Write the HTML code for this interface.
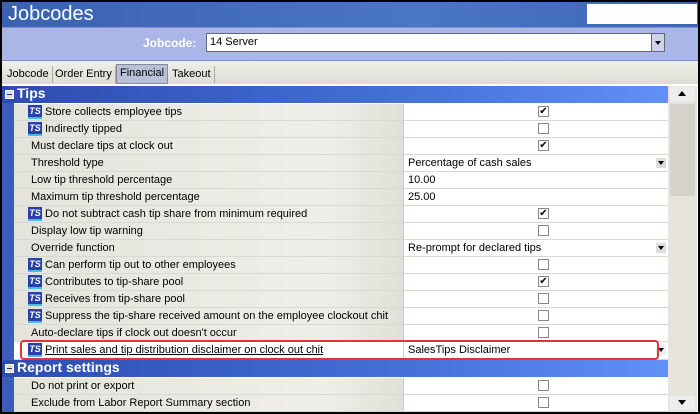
<!DOCTYPE html>
<html><head><style>
*{margin:0;padding:0;box-sizing:border-box}
body{width:700px;height:414px;background:#000;font-family:"Liberation Sans",sans-serif;font-size:11px;color:#000;position:relative;overflow:hidden}
.a{position:absolute}
#title{left:2px;top:2px;width:696px;height:25px;background:linear-gradient(90deg,#3a62b0,#4a76c6 60%,#3d66b8)}
#title span{position:absolute;left:6px;top:1px;color:#fff;font-size:20px}
#wbox{left:587px;top:4px;width:110px;height:20px;background:#fff}
#jrow{left:2px;top:27px;width:696px;height:33px;background:#aab6e6;border-top:1px solid #8090c8}
#tabs{left:2px;top:60px;width:696px;height:24px;background:linear-gradient(#f0efe8,#dddcd4);border-top:1px solid #8090c8}
.tab{position:absolute;top:5px;height:17px;padding:2px 3px 0;border-right:1px solid #aaa;font-size:11px}
#grid{left:2px;top:84px;width:696px;height:328px;background:#fff}
.strip{left:2px;top:86px;width:12px;height:326px;background:#3c5cb8}
.hdr{position:absolute;left:2px;width:666px;height:17px;background:linear-gradient(90deg,#2d4cb0,#4470d8 60%,#6090f8);color:#fff;font-weight:bold;font-size:14px}
.hdr b{position:absolute;left:15px;top:-1px}
.minus{position:absolute;left:3px;top:4px;width:9px;height:9px;background:#dde;border:1px solid #fff}
.minus:after{content:"";position:absolute;left:1px;top:3px;width:5px;height:1px;background:#335}
.row{position:absolute;left:14px;width:654px;height:17px;border-bottom:1px solid #d8d8d4}
.lab{position:absolute;left:0;top:0;width:390px;height:16px;background:linear-gradient(90deg,#e4e3dc,#efeee8 80%,#e0dfd8);padding:2px 0 0 17px;white-space:nowrap;border-right:1px solid #ccc}
.lab.ts{padding-left:31px}
.ic{position:absolute;left:14px;top:1px;width:14px;height:14px;background:#2840a8;color:#fff;font-size:9px;font-weight:bold;line-height:12px;text-align:center;border-bottom:2px solid #40c0e0}
.val{position:absolute;left:390px;top:0;width:264px;height:16px;background:#fff;padding:2px 0 0 4px}
.cb{position:absolute;left:134px;top:2px;width:11px;height:11px;border:1px solid #888;background:#fff;font-size:10px;line-height:9px;text-align:center}
.dd{position:absolute;right:2px;top:3px;width:10px;height:10px;background:#ddd}
.dd:after{content:"";position:absolute;left:2px;top:3px;border-left:3px solid transparent;border-right:3px solid transparent;border-top:4px solid #000}
#sb{left:668px;top:86px;width:29px;height:326px;background:#e6e4dc}
#thumb{left:670px;top:104px;width:25px;height:92px;background:#d4d2ca}
</style></head><body>
<div class="a" id="title"><span>Jobcodes</span></div>
<div class="a" id="wbox"></div>
<div class="a" id="jrow">
 <span class="a" style="left:141px;top:8px;color:#fff;font-weight:bold;font-size:12px">Jobcode:</span>
 <div class="a" style="left:204px;top:5px;width:446px;height:19px;background:#fff;border:1px solid #666;padding:2px 3px">14 Server</div>
 <div class="a" style="left:649px;top:5px;width:14px;height:19px;background:#cdd3ee;border:1px solid #666"><div class="dd" style="right:1px;top:4px;background:none"></div></div>
</div>
<div class="a" id="tabs">
 <div class="tab" style="left:2px">Jobcode</div>
 <div class="tab" style="left:50px">Order Entry</div>
 <div class="tab" style="left:114px;background:#b8c0d8;border:1px solid #889;top:3px;height:20px">Financial</div>
 <div class="tab" style="left:167px">Takeout</div>
</div>
<div class="a" id="grid"></div>
<div class="a strip"></div>
<div class="a" id="sb"></div>
<div class="a" id="thumb"></div>
<div class="a" style="left:670px;top:87px;width:25px;height:14px;background:#eee"><div class="a" style="left:8px;top:4px;border-left:4px solid transparent;border-right:4px solid transparent;border-bottom:5px solid #000"></div></div>
<div class="a" style="left:670px;top:396px;width:25px;height:14px;background:#eee"><div class="a" style="left:8px;top:4px;border-left:4px solid transparent;border-right:4px solid transparent;border-top:5px solid #000"></div></div>

<div class="hdr" style="top:86px"><div class="minus"></div><b>Tips</b></div>

<div class="row" style="top:104px"><div class="lab ts"><i class="ic">TS</i>Store collects employee tips</div><div class="val"><div class="cb">✔</div></div></div>
<div class="row" style="top:121px"><div class="lab ts"><i class="ic">TS</i>Indirectly tipped</div><div class="val"><div class="cb"></div></div></div>
<div class="row" style="top:138px"><div class="lab">Must declare tips at clock out</div><div class="val"><div class="cb">✔</div></div></div>
<div class="row" style="top:155px"><div class="lab">Threshold type</div><div class="val">Percentage of cash sales<div class="dd"></div></div></div>
<div class="row" style="top:172px"><div class="lab">Low tip threshold percentage</div><div class="val">10.00</div></div>
<div class="row" style="top:189px"><div class="lab">Maximum tip threshold percentage</div><div class="val">25.00</div></div>
<div class="row" style="top:206px"><div class="lab ts"><i class="ic">TS</i>Do not subtract cash tip share from minimum required</div><div class="val"><div class="cb">✔</div></div></div>
<div class="row" style="top:223px"><div class="lab">Display low tip warning</div><div class="val"><div class="cb"></div></div></div>
<div class="row" style="top:240px"><div class="lab">Override function</div><div class="val">Re-prompt for declared tips<div class="dd"></div></div></div>
<div class="row" style="top:257px"><div class="lab ts"><i class="ic">TS</i>Can perform tip out to other employees</div><div class="val"><div class="cb"></div></div></div>
<div class="row" style="top:274px"><div class="lab ts"><i class="ic">TS</i>Contributes to tip-share pool</div><div class="val"><div class="cb">✔</div></div></div>
<div class="row" style="top:291px"><div class="lab ts"><i class="ic">TS</i>Receives from tip-share pool</div><div class="val"><div class="cb"></div></div></div>
<div class="row" style="top:308px"><div class="lab ts"><i class="ic">TS</i>Suppress the tip-share received amount on the employee clockout chit</div><div class="val"><div class="cb"></div></div></div>
<div class="row" style="top:325px"><div class="lab">Auto-declare tips if clock out doesn't occur</div><div class="val"><div class="cb"></div></div></div>
<div class="row" style="top:342px;height:18px"><div class="lab ts" style="background:#fff"><i class="ic">TS</i><u>Print sales and tip distribution disclaimer on clock out chit</u></div><div class="val">SalesTips Disclaimer<div class="dd" style="background:#eee"></div></div></div>
<div class="a" style="left:20px;top:340px;width:639px;height:20px;border:2px solid #e8303a;border-radius:4px"></div>

<div class="hdr" style="top:360px"><div class="minus"></div><b>Report settings</b></div>
<div class="row" style="top:378px"><div class="lab">Do not print or export</div><div class="val"><div class="cb"></div></div></div>
<div class="row" style="top:395px"><div class="lab">Exclude from Labor Report Summary section</div><div class="val"><div class="cb"></div></div></div>
</body></html>
